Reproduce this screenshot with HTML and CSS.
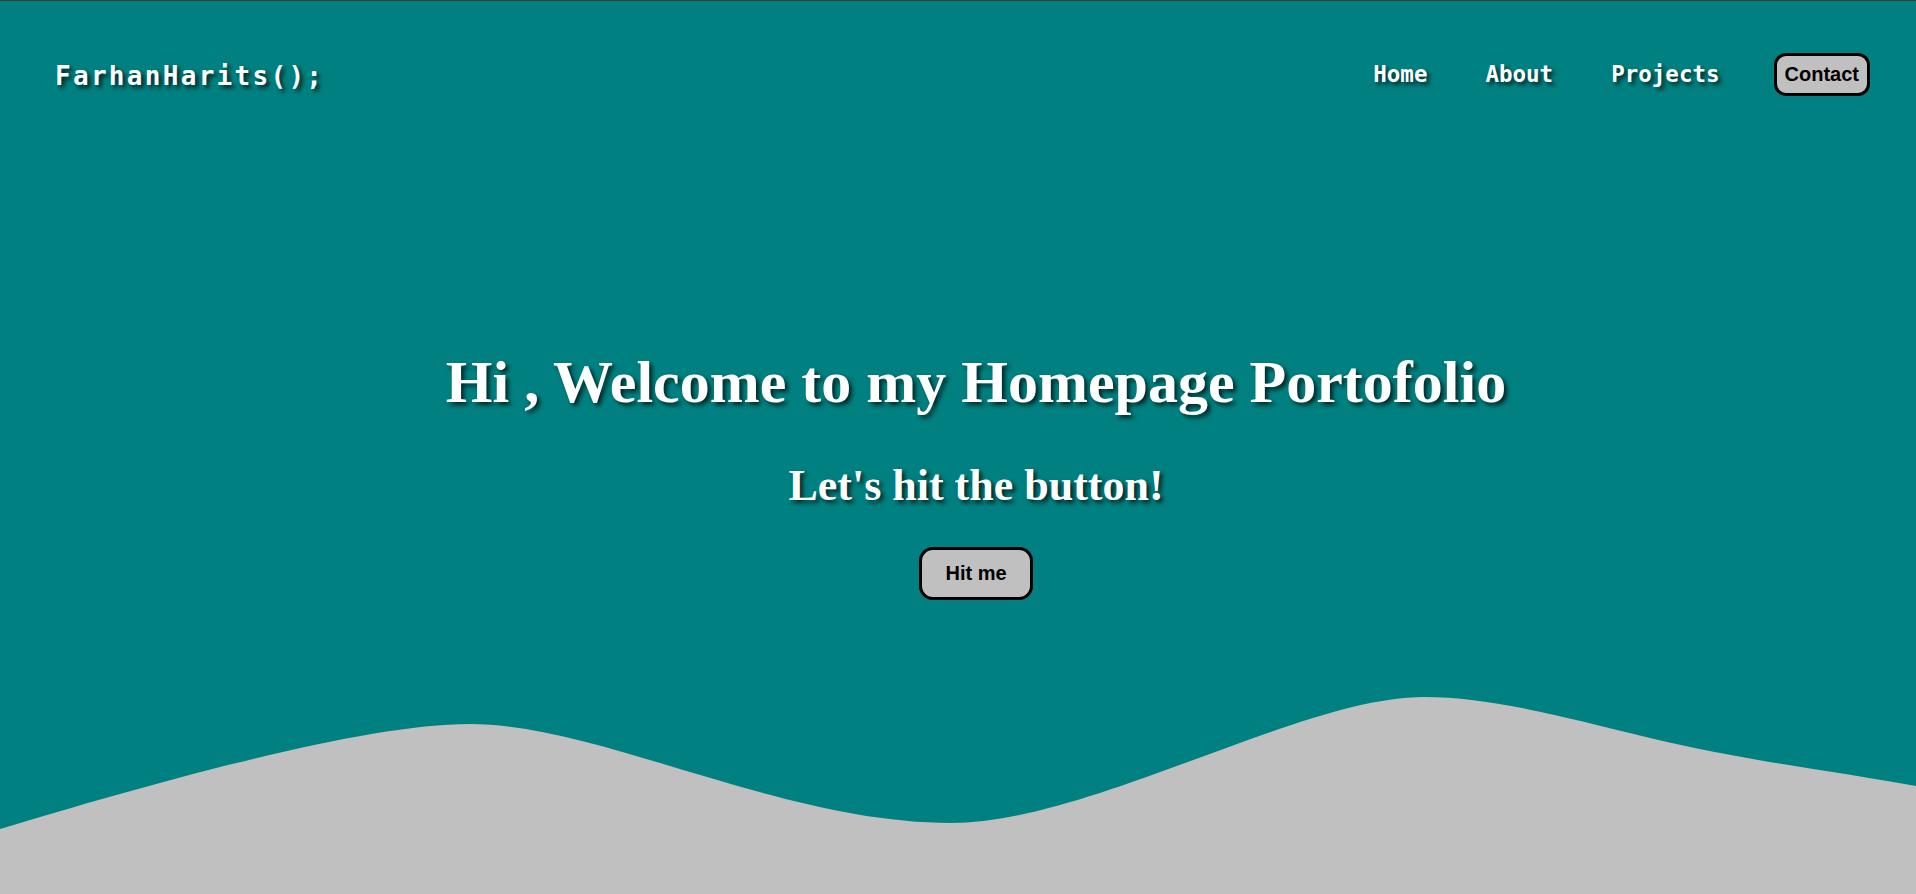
FILE: index.html
```html
<!DOCTYPE html>
<html lang="en">
<head>
<meta charset="utf-8">
<title>FarhanHarits</title>
<link rel="stylesheet" href="styles.css">
</head>
<body>
<section class="hero">
  <header class="topbar">
    <div class="logo">FarhanHarits();</div>
    <nav class="nav">
      <a class="nav-link" href="#">Home</a>
      <a class="nav-link" href="#">About</a>
      <a class="nav-link" href="#">Projects</a>
      <a class="nav-btn" href="#">Contact</a>
    </nav>
  </header>
  <main class="intro">
    <h1 class="title">Hi , Welcome to my Homepage Portofolio</h1>
    <h2 class="subtitle">Let's hit the button!</h2>
    <button class="hit-btn" type="button">Hit me</button>
  </main>
  <svg class="wave" viewBox="0 0 1916 200" preserveAspectRatio="none" aria-hidden="true">
    <path fill="#c0c0c0" d="M0,135 C150,90 360,30 470,30 C600,30 780,129 951,129 C1090,129 1300,3 1424,3 C1490,3 1560,22 1650,44 C1740,66 1840,78 1916,92 L1916,200 L0,200 Z"/>
  </svg>
</section>
</body>
</html>
```

FILE: styles.css
```css
* {
  box-sizing: border-box;
}

html, body {
  margin: 0;
  padding: 0;
}

body {
  background: #c0c0c0;
  font-family: "Liberation Sans", Arial, sans-serif;
}

.hero {
  height: 100vh;
  display: flex;
  flex-direction: column;
  background: #008080;
  border-top: 1px solid #3b3b3b;
  overflow: hidden;
}

.topbar {
  height: 146px;
  display: flex;
  align-items: center;
  justify-content: space-between;
  padding: 0 46px 0 55px;
  flex-shrink: 0;
}

.logo {
  font-family: "DejaVu Sans Mono", monospace;
  font-weight: bold;
  font-size: 26px;
  letter-spacing: 2.3px;
  color: #fff;
  text-shadow: 3px 3px 4px rgba(0, 0, 0, 0.75);
  margin-top: 3px;
}

.nav {
  display: flex;
  align-items: center;
  gap: 58px;
}

.nav-link {
  font-family: "DejaVu Sans Mono", monospace;
  font-weight: bold;
  font-size: 22.5px;
  color: #fff;
  text-decoration: none;
  text-shadow: 3px 3px 4px rgba(0, 0, 0, 0.7);
  margin-top: -1px;
}

.nav-btn {
  font-family: "Liberation Sans", Arial, sans-serif;
  font-weight: bold;
  font-size: 20px;
  color: #000;
  text-decoration: none;
  background: #c0c0c0;
  border: 3px solid #000;
  border-radius: 12px;
  padding: 7px 8px;
  line-height: 23px;
  margin-left: -4px;
  margin-top: 1px;
}

.intro {
  margin-top: 199px;
  padding-left: 36px;
  display: flex;
  flex-direction: column;
  align-items: center;
  text-align: center;
}

.title {
  margin: 0;
  font-family: "Liberation Serif", "Times New Roman", serif;
  font-weight: bold;
  font-size: 60px;
  line-height: 72px;
  color: #fff;
  text-shadow: 3px 3px 4px rgba(0, 0, 0, 0.7);
}

.subtitle {
  margin: 42px 0 0;
  font-family: "Liberation Serif", "Times New Roman", serif;
  font-weight: bold;
  font-size: 44px;
  line-height: 52px;
  color: #fff;
  text-shadow: 3px 3px 4px rgba(0, 0, 0, 0.7);
}

.hit-btn {
  margin-top: 35px;
  font-family: "Liberation Sans", Arial, sans-serif;
  font-weight: bold;
  font-size: 20px;
  line-height: 23px;
  color: #000;
  background: #c0c0c0;
  border: 3px solid #000;
  border-radius: 14px;
  padding: 12px 23px;
  cursor: pointer;
}

.wave {
  display: block;
  width: 100%;
  height: 200px;
  margin-top: auto;
  flex-shrink: 0;
}
```
